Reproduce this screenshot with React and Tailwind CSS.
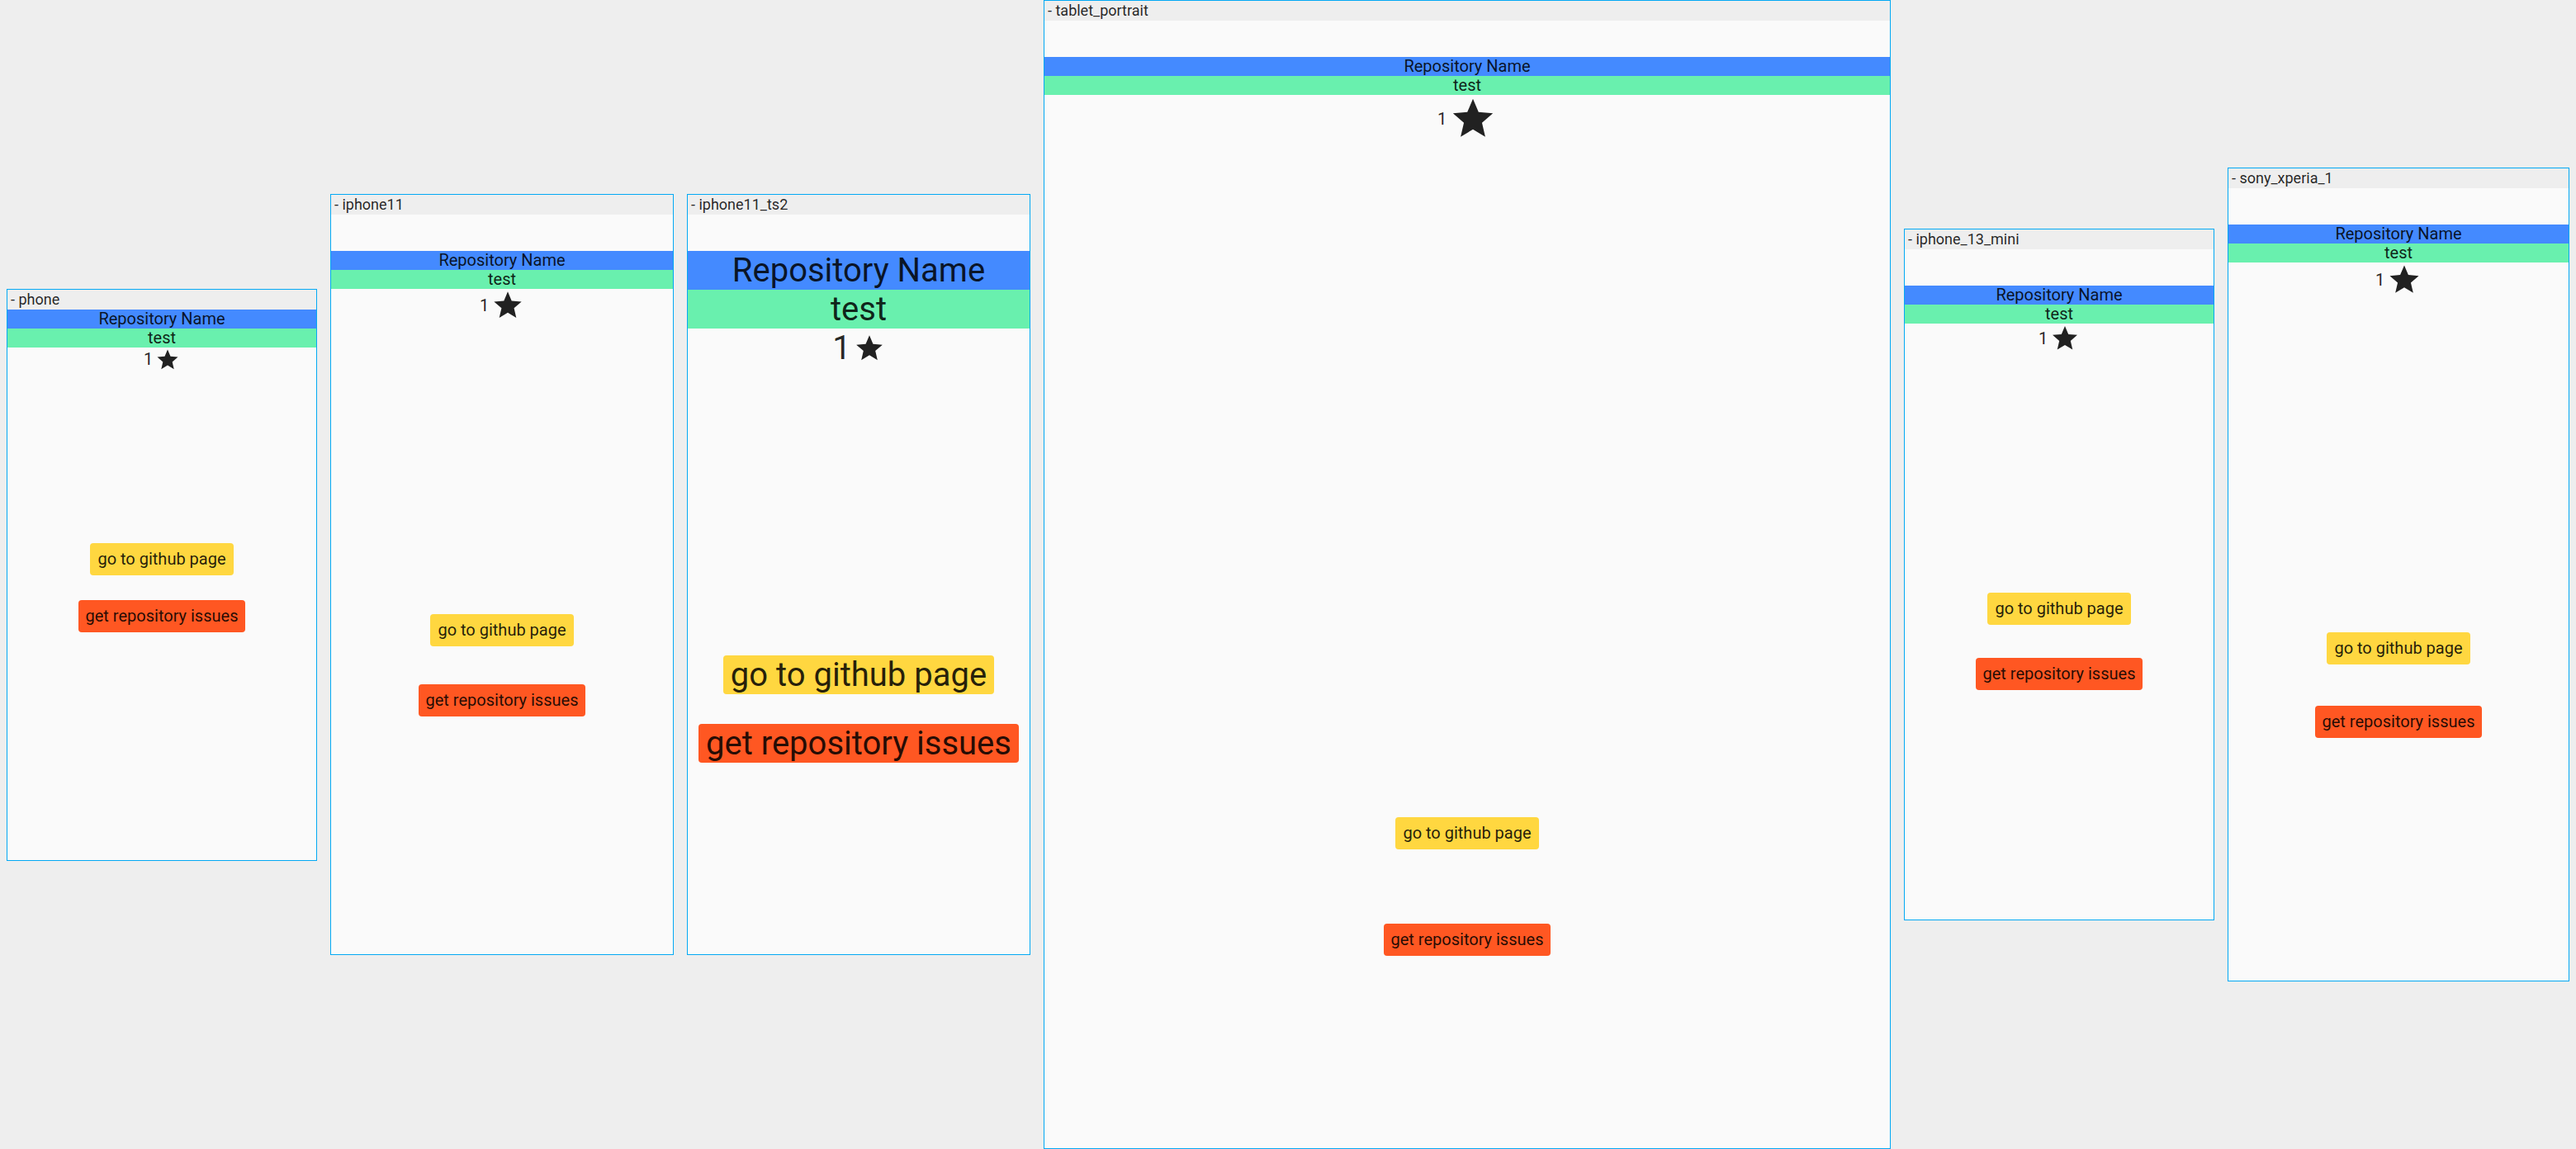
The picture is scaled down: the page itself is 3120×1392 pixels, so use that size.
const devices = [
  {
    name: 'phone',
    frame: 'w-[376px]',
    screen: 'h-[667px]',
    safe: 'pt-0',
    text: 'text-[20px] leading-[23px]',
    star: 'w-[30px] h-[30px]',
    spacer: 'h-[207px]',
    gap: 'gap-[30px]',
    btn: 'px-[9px] py-[8px]',
  },
  {
    name: 'iphone11',
    frame: 'w-[416px]',
    screen: 'h-[896px]',
    safe: 'pt-[44px]',
    text: 'text-[20px] leading-[23px]',
    star: 'w-[40px] h-[40px]',
    spacer: 'h-[354px]',
    gap: 'gap-[46px]',
    btn: 'px-[9px] py-[8px]',
  },
  {
    name: 'iphone11_ts2',
    frame: 'w-[416px]',
    screen: 'h-[896px]',
    safe: 'pt-[44px]',
    text: 'text-[40px] leading-[47px]',
    star: 'w-[38px] h-[38px]',
    spacer: 'h-[349px]',
    gap: 'gap-[36px]',
    btn: 'px-[9px] py-0',
  },
  {
    name: 'tablet_portrait',
    frame: 'w-[1026px]',
    screen: 'h-[1366px]',
    safe: 'pt-[44px]',
    text: 'text-[20px] leading-[23px]',
    star: 'w-[58px] h-[58px]',
    spacer: 'h-[817px]',
    gap: 'gap-[90px]',
    btn: 'px-[9px] py-[8px]',
  },
  {
    name: 'iphone_13_mini',
    frame: 'w-[376px]',
    screen: 'h-[812px]',
    safe: 'pt-[44px]',
    text: 'text-[20px] leading-[23px]',
    star: 'w-[36px] h-[36px]',
    spacer: 'h-[290px]',
    gap: 'gap-[40px]',
    btn: 'px-[9px] py-[8px]',
  },
  {
    name: 'sony_xperia_1',
    frame: 'w-[414px]',
    screen: 'h-[960px]',
    safe: 'pt-[44px]',
    text: 'text-[20px] leading-[23px]',
    star: 'w-[42px] h-[42px]',
    spacer: 'h-[406px]',
    gap: 'gap-[50px]',
    btn: 'px-[9px] py-[8px]',
  },
]

function Star({ className }) {
  return (
    <svg viewBox="0 0 24 24" className={className}>
      <path
        fill="#212121"
        d="M12 17.27L18.18 21l-1.64-7.03L22 9.24l-7.19-.61L12 2 9.19 8.63 2 9.24l5.46 4.73L5.82 21z"
      />
    </svg>
  )
}

function DeviceFrame({ d }) {
  return (
    <div className={`${d.frame} shrink-0 border border-[#03a9f4] bg-[#fafafa]`}>
      <div className="h-[24px] bg-[#eeeeee] pl-[4px] text-[18px] leading-[24px] text-black/85">
        - {d.name}
      </div>
      <div className={`${d.screen} ${d.safe} ${d.text} flex flex-col text-black/87`}>
        <div className="bg-[#448aff] text-center">Repository Name</div>
        <div className="bg-[#69f0ae] text-center">test</div>
        <div className="flex items-center justify-center gap-[3px]">
          <span>1</span>
          <Star className={d.star} />
        </div>
        <div className={d.spacer} />
        <div className={`flex flex-col items-center ${d.gap}`}>
          <div className={`${d.btn} rounded-[4px] bg-[#ffd740]`}>go to github page</div>
          <div className={`${d.btn} rounded-[4px] bg-[#ff5722]`}>get repository issues</div>
        </div>
      </div>
    </div>
  )
}

export default function App() {
  return (
    <div className="flex h-[1392px] w-[3120px] items-center gap-4 bg-[#eeeeee] px-2 font-['Roboto',sans-serif]">
      {devices.map((d) => (
        <DeviceFrame key={d.name} d={d} />
      ))}
    </div>
  )
}
